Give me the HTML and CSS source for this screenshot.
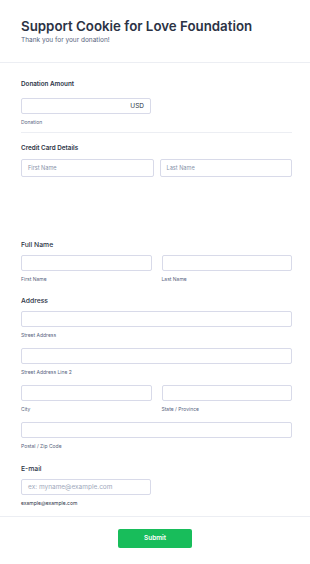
FILE: index.html
```html
<!DOCTYPE html>
<html lang="en">
<head>
<meta charset="utf-8">
<title>Support Cookie for Love Foundation</title>
<link rel="stylesheet" href="styles.css">
</head>
<body>
<div class="form">
  <header class="header">
    <h1 class="title">Support Cookie for Love Foundation</h1>
    <p class="subtitle">Thank you for your donation!</p>
  </header>

  <div class="body">
    <div class="field donation">
      <div class="label">Donation Amount</div>
      <div class="input input-half currency"><span class="cur">USD</span></div>
      <div class="sublabel">Donation</div>
    </div>
    <div class="rule"></div>

    <div class="field card">
      <div class="label">Credit Card Details</div>
      <div class="row tight">
        <div class="input tall"><span class="ph">First Name</span></div>
        <div class="input tall"><span class="ph">Last Name</span></div>
      </div>
    </div>

    <div class="field fullname">
      <div class="label medium">Full Name</div>
      <div class="row">
        <div class="col">
          <div class="input"></div>
          <div class="sublabel">First Name</div>
        </div>
        <div class="col">
          <div class="input"></div>
          <div class="sublabel">Last Name</div>
        </div>
      </div>
    </div>

    <div class="field address">
      <div class="label medium">Address</div>
      <div class="input"></div>
      <div class="sublabel">Street Address</div>
      <div class="input gap-top"></div>
      <div class="sublabel">Street Address Line 2</div>
      <div class="row gap-top">
        <div class="col">
          <div class="input"></div>
          <div class="sublabel">City</div>
        </div>
        <div class="col">
          <div class="input"></div>
          <div class="sublabel">State / Province</div>
        </div>
      </div>
      <div class="input gap-top"></div>
      <div class="sublabel">Postal / Zip Code</div>
    </div>

    <div class="field email">
      <div class="label medium">E-mail</div>
      <div class="input input-half"><span class="ph light">ex: myname@example.com</span></div>
      <div class="sublabel dark">example@example.com</div>
    </div>
  </div>

  <div class="footer">
    <button class="submit" type="button">Submit</button>
  </div>
</div>
</body>
</html>
```

FILE: styles.css
```css
* { box-sizing: border-box; }
html, body { margin: 0; padding: 0; background: #fff; }
body { font-family: Inter, "Noto Sans", "Liberation Sans", sans-serif; color: #2c3345; }

.form { width: 310px; }

.header {
  padding: 16.8px 21px 0;
  height: 63px;
  border-bottom: 1px solid #eceef3;
}
.title {
  margin: 0;
  font-size: 13.3px;
  line-height: 18px;
  font-weight: 600;
  color: #2c3345;
}
.subtitle {
  margin: 1.5px 0 0;
  font-size: 6.5px;
  line-height: 9px;
  color: #57647e;
}

.body { padding: 0 18px 0 21px; }

.field { display: flex; flex-direction: column; }
.label {
  font-size: 6.3px;
  line-height: 9px;
  font-weight: 600;
  color: #2c3345;
  margin-bottom: 6px;
}
.label.medium {
  font-size: 6.8px;
  font-weight: 500;
}
.sublabel {
  font-size: 5px;
  line-height: 6px;
  color: #57647e;
  margin-top: 5px;
}
.sublabel.dark { color: #2c3345; }

.input {
  height: 16px;
  border: 1px solid #d8dae9;
  border-radius: 2px;
  background: #fff;
  display: flex;
  align-items: center;
  padding: 0 6px;
}
.input.tall { height: 18px; }
.input-half { width: 130px; }
.currency { justify-content: flex-end; }
.cur { font-size: 6.5px; color: #2c3345; }
.ph { font-size: 5.6px; color: #8894ab; }
.ph.light { font-size: 6.5px; color: #a0a8bb; }

.gap-top { margin-top: 10px; }

.row { display: flex; gap: 10px; }
.row.tight { gap: 6px; }
.col { flex: 1; display: flex; flex-direction: column; }
.row > .input { flex: 1; }

.donation { padding-top: 16.5px; }
.donation .label { margin-bottom: 9.5px; }
.rule { height: 1px; background: #eceef3; margin-top: 7px; }
.card { padding-top: 10.5px; }
.card .label { margin-bottom: 6.5px; }
.fullname { padding-top: 62.5px; }
.address { padding-top: 14px; }
.email { padding-top: 15px; }

.footer {
  margin-top: 10px;
  border-top: 1px solid #eceef3;
  padding-top: 12px;
  display: flex;
  justify-content: center;
}
.submit {
  width: 74px;
  height: 19px;
  border: 0;
  border-radius: 2px;
  background: #18bd5b;
  color: #fff;
  font-family: Inter, "Noto Sans", sans-serif;
  font-size: 6.5px;
  font-weight: 600;
  padding: 0;
}
```
